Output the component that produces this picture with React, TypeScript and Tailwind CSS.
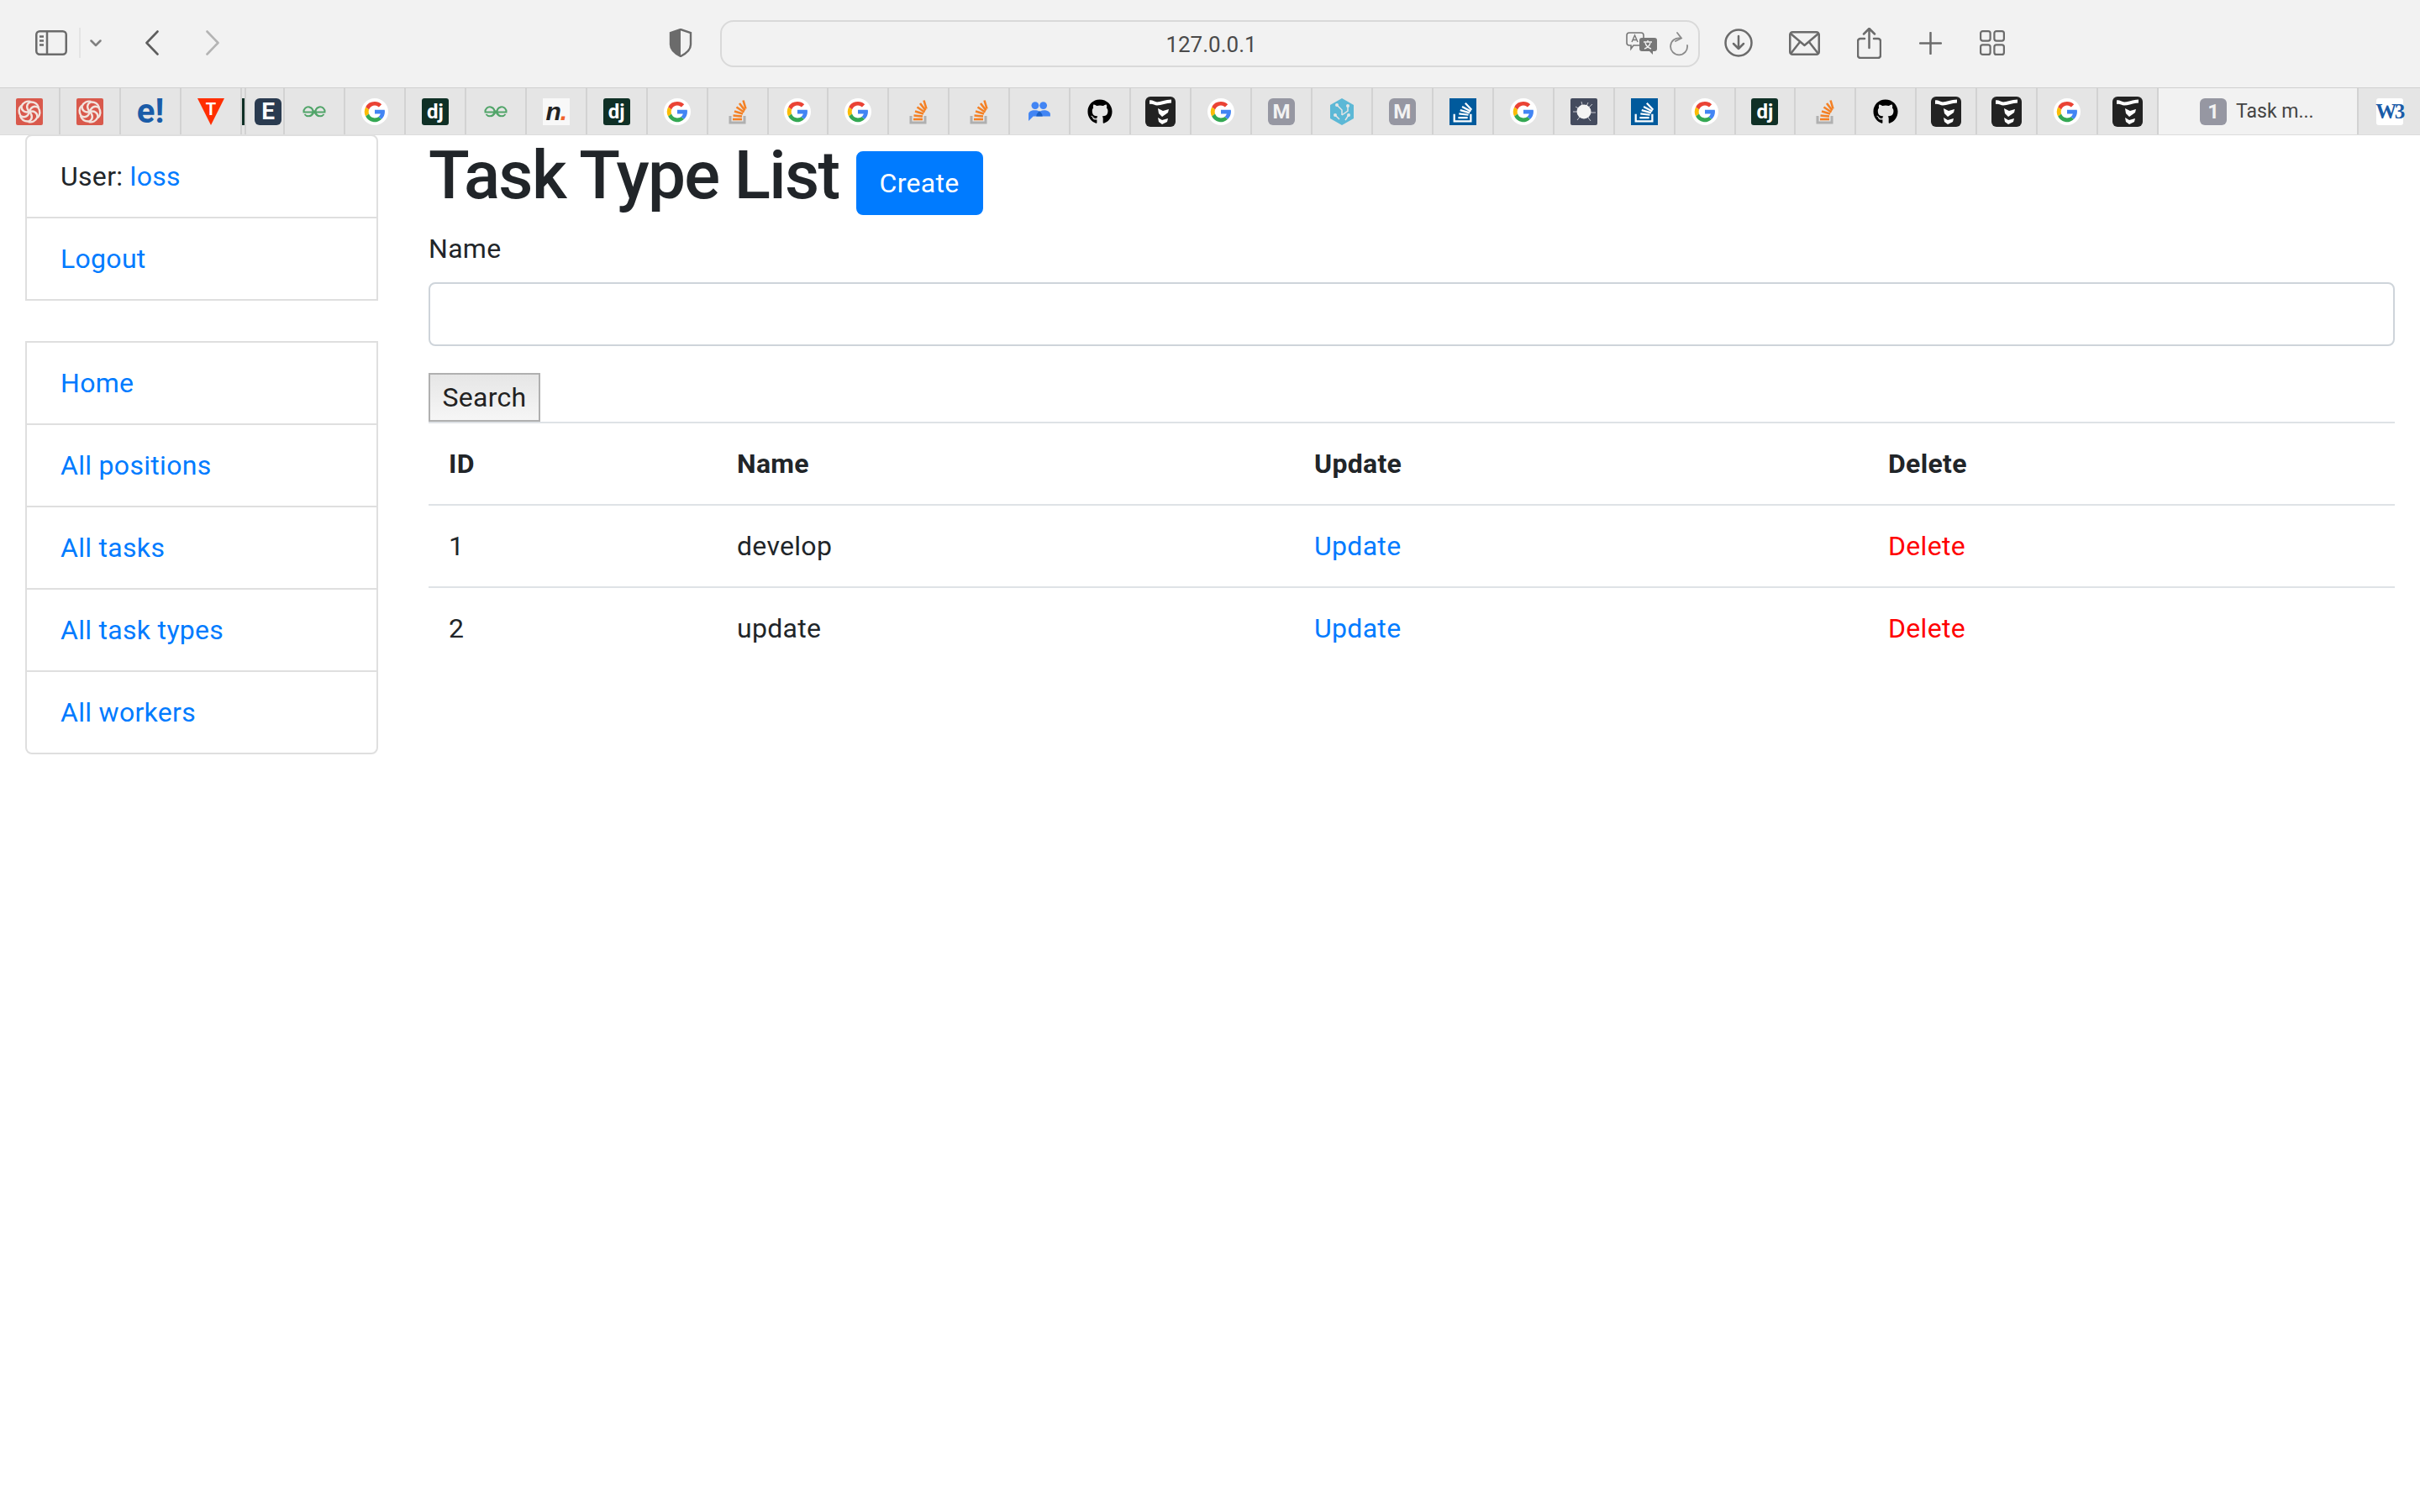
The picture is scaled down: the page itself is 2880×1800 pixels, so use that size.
import { FaGithub } from "react-icons/fa"

const iconStroke = "#6b6b6b"

function GoogleIcon() {
  return (
    <svg width="32" height="32" viewBox="0 0 32 32">
      <circle cx="16" cy="16" r="16" fill="#fff" />
      <g transform="translate(16 16) scale(1.26) translate(-16 -16)">
        <path d="M16 6.500a9.500 9.500 0 0 1 6.500 2.500l-2.600 2.600A5.800 5.800 0 0 0 10.500 14L7.400 11.600A9.500 9.500 0 0 1 16 6.500z" fill="#ea4335" />
        <path d="M7.400 11.600l3.100 2.400a5.800 5.800 0 0 0 0 4l-3.100 2.400a9.500 9.500 0 0 1 0-8.800z" fill="#fbbc05" />
        <path d="M7.400 20.400l3.100-2.400A5.800 5.800 0 0 0 19.500 20.700l3 2.300A9.500 9.500 0 0 1 7.400 20.400z" fill="#34a853" />
        <path d="M25.300 14.200H16v3.700h5.400c-.3 1.200-1 2.100-1.900 2.800l3 2.300c1.800-1.700 3-4.200 3-7 0-.6-.1-1.200-.2-1.800z" fill="#4285f4" />
      </g>
    </svg>
  )
}

function DjangoIcon() {
  return (
    <span className="flex h-8 w-8 items-center justify-center rounded-[3px] bg-[#0f3026] text-[24px] font-bold leading-none tracking-normal text-white">
      dj
    </span>
  )
}

function GfgIcon() {
  return (
    <svg width="28" height="15" viewBox="0 0 28 15" fill="none" stroke="#52a56a" strokeWidth="2">
      <path d="M14 8.500h12.500a5.500 5.500 0 1 0-1 2.500M14 8.500H1.500a5.500 5.500 0 1 1 1 2.500" />
      <path d="M8 2.500c3 0 4 3 6 6s3 5 6 5M20 2.500c-3 0-4 3-6 6s-3 5-6 5" strokeWidth="1.600" />
    </svg>
  )
}

function StackIcon() {
  return (
    <svg width="32" height="32" viewBox="0 0 32 32" fill="none">
      <path d="M7 21v8h17v-8" stroke="#b0b0b0" strokeWidth="3" />
      <path d="M10 25h11" stroke="#f48024" strokeWidth="2.600" />
      <path d="M10.500 20.500l10.500 1M12 15.500l10 3M14.500 10.500l9 6M18 6l6.500 8.500M22.500 2.500l3 10" stroke="#f48024" strokeWidth="2.600" />
    </svg>
  )
}

function StackBlueIcon() {
  return (
    <span className="flex h-8 w-8 items-center justify-center bg-[#005a9c]">
      <svg width="30" height="30" viewBox="0 0 32 32" fill="none" stroke="#fff" strokeWidth="2.400">
        <path d="M5 19v9h21v-9" />
        <path d="M10 23.500h12M11 18.500l12 1.500M12.500 14l12 3.500M15 9.500l11 6M19 5l8 8.500" />
      </svg>
    </span>
  )
}

function WaveIcon() {
  return (
    <svg width="36" height="36" viewBox="0 0 36 36">
      <rect width="36" height="36" rx="6" fill="#222" />
      <path d="M5 4.500C8 3.500 11 6.500 14 6.500 18 6.500 24 3.500 31 3.500L31 7.500C25 7.500 19 10.500 14 10.500 11 10.500 8 8 5 9z" fill="#fff" />
      <path d="M15 14l6 3 7-2-1 4-7 5-4-4z" fill="#fff" />
      <path d="M15 25l5 3 7-2-1 4-6 3-4-3z" fill="#fff" />
    </svg>
  )
}

function SwirlIcon() {
  return (
    <span className="flex h-8 w-8 items-center justify-center rounded-[2px] bg-[#d9594c]">
      <svg width="30" height="30" viewBox="0 0 30 30" fill="none" stroke="#f2e4de" strokeWidth="2.400">
        {[0, 60, 120, 180, 240, 300].map((a) => (
          <path key={a} d="M15 15C11 11 11 6 16 3.500C21 3 25 6 26 10" transform={`rotate(${a} 15 15)`} />
        ))}
      </svg>
    </span>
  )
}

function PeopleIcon() {
  return (
    <svg width="26" height="24" viewBox="0 0 28 26">
      <circle cx="8.500" cy="5" r="4.800" fill="#4285f4" />
      <circle cx="19" cy="5" r="4.800" fill="#4285f4" />
      <path d="M0 25v-9c0-3 3-5 8-5s6 2 6 2 2-2 6-2 8 2 8 5v3H6z" fill="#4285f4" />
      <path d="M10 19c0-3 2-5 4-7 2 2 4 4 4 7z" fill="#1a5fc4" />
    </svg>
  )
}

function HexIcon() {
  return (
    <svg width="28" height="32" viewBox="0 0 28 32" fill="none">
      <path d="M14 0l14 8v16l-14 8-14-8V8z" fill="#5cb8d6" />
      <path d="M8 8l6 6v6M21 10v5l-7 5M6 20l5 5M18 26l4-6" stroke="#e5e5e5" strokeWidth="1.500" />
      <circle cx="8" cy="8" r="2" fill="#e5e5e5" />
      <circle cx="21" cy="9" r="2" fill="#e5e5e5" />
      <circle cx="6" cy="20" r="2" fill="#e5e5e5" />
      <circle cx="22" cy="20" r="2" fill="#e5e5e5" />
    </svg>
  )
}

function LetterBadge({ letter }: { letter: string }) {
  return (
    <span className="flex h-8 w-8 items-center justify-center rounded-md bg-[#9697a2] text-[24px] font-bold leading-none tracking-normal text-[#f2f2f2]">
      {letter}
    </span>
  )
}

function NebulaIcon() {
  return (
    <span className="flex h-8 w-8 items-center justify-center rounded-[2px] bg-[#444b5e]">
      <svg width="30" height="30" viewBox="0 0 30 30" fill="none">
        <path d="M5 9l10 6M25 6L15 15M29 16H15M23 26l-8-11M7 25l8-10M2 15h12M12 3l3 12M20 4l-5 11" stroke="#c8cad2" strokeWidth="1" />
        <circle cx="15" cy="15" r="8.500" fill="#f4f4f4" />
      </svg>
    </span>
  )
}

function TriangleIcon() {
  return (
    <span className="relative flex h-8 w-8 items-start justify-center">
      <svg width="32" height="32" viewBox="0 0 32 32" className="absolute inset-0">
        <path d="M0 0h32L16 32z" fill="#ff2e00" />
      </svg>
      <span className="relative mt-[3px] text-[20px] font-bold leading-[20px] tracking-normal text-white">T</span>
    </span>
  )
}

function NIcon() {
  return (
    <span className="flex h-8 w-8 items-center justify-center bg-[#f8f8f8] font-['Liberation_Sans',sans-serif] text-[30px] font-bold italic leading-none tracking-[-1px] text-[#222]">
      n<span className="text-[#f0622a]">.</span>
    </span>
  )
}

const FAVICONS: Record<string, React.ReactNode> = {
  gfg: <GfgIcon />,
  g: <GoogleIcon />,
  dj: <DjangoIcon />,
  n: <NIcon />,
  so: <StackIcon />,
  people: <PeopleIcon />,
  gh: <FaGithub className="h-[30px] w-[30px] text-black" />,
  w: <WaveIcon />,
  m: <LetterBadge letter="M" />,
  hex: <HexIcon />,
  soblue: <StackBlueIcon />,
  dark: <NebulaIcon />,
}

const tabs = [
  "gfg", "g", "dj", "gfg", "n", "dj", "g", "so", "g", "g", "so", "so", "people", "gh", "w", "g",
  "m", "hex", "m", "soblue", "g", "dark", "soblue", "g", "dj", "so", "gh", "w", "w", "g", "w",
]

function Toolbar() {
  return (
    <div className="flex h-[104px] items-center bg-[#f2f2f2] pb-[2px]">
      <svg className="ml-[42px]" width="38" height="30" viewBox="0 0 38 30" fill="none" stroke={iconStroke} strokeWidth="2.500">
        <rect x="1.250" y="1.250" width="35.500" height="27.500" rx="4" />
        <path d="M14 1v28M5 7.500h5M5 12.500h5M5 17.500h5" />
      </svg>
      <div className="ml-[14px] h-[36px] w-[2px] bg-[#e4e4e4]" />
      <svg className="ml-[11px]" width="14" height="9" viewBox="0 0 14 9" fill="none" stroke="#808080" strokeWidth="2.500" strokeLinecap="round" strokeLinejoin="round">
        <path d="M1.500 1.500L7 7l5.500-5.500" />
      </svg>
      <svg className="ml-[52px]" width="16" height="30" viewBox="0 0 16 30" fill="none" stroke="#5e5e5e" strokeWidth="2.600" strokeLinecap="round" strokeLinejoin="round">
        <path d="M14.500 1.500L1.500 15l13 13.500" />
      </svg>
      <svg className="ml-[56px]" width="16" height="30" viewBox="0 0 16 30" fill="none" stroke="#b4b4b4" strokeWidth="2.600" strokeLinecap="round" strokeLinejoin="round">
        <path d="M1.500 1.500L14.500 15l-13 13.500" />
      </svg>
      <svg className="ml-[535px]" width="28" height="34" viewBox="0 0 28 34" fill="none">
        <path d="M14 1l12 4v14c0 6-6 11-12 14C8 30 2 25 2 19V5z" stroke={iconStroke} strokeWidth="2.400" />
        <path d="M14 1L2 5v14c0 6 6 11 12 14z" fill={iconStroke} />
      </svg>
      <div className="ml-[33px] mt-[2px] grid h-[56px] w-[1166px] grid-cols-[1fr_auto_1fr] items-center rounded-2xl border-2 border-[#d9d9d9]">
        <div />
        <span className="pl-[3px] pt-[2px] text-[26px] leading-none tracking-normal text-[#4a4a4a]">127.0.0.1</span>
        <div className="flex items-center justify-end pr-[12px]">
          <svg width="38" height="28" viewBox="0 0 38 28" fill="none">
            <path d="M4 1h14a3 3 0 0 1 3 3v9a3 3 0 0 1-3 3H9l-3 4v-4H4a3 3 0 0 1-3-3V4a3 3 0 0 1 3-3z" stroke="#777" strokeWidth="1.600" fill="#f2f2f2" />
            <path d="M7 12l3.500-8 3.500 8M8.200 9.500h4.600" stroke="#777" strokeWidth="1.400" />
            <path d="M19 7h15a3 3 0 0 1 3 3v10a3 3 0 0 1-3 3h-2v4l-4-4h-9a3 3 0 0 1-3-3V10a3 3 0 0 1 3-3z" fill="#777" />
            <path d="M21 12h10M26 10v2M23 13c1 4 4 6 7 7M29 13c-1 4-4 6-7 7" stroke="#f2f2f2" strokeWidth="1.400" />
          </svg>
          <svg className="ml-[14px]" width="22" height="30" viewBox="0 0 22 30" fill="none" stroke="#8a8a8a" strokeWidth="1.800" strokeLinecap="round">
            <path d="M13 8.500A10 10 0 1 0 21 17" />
            <path d="M9 2l5 6.500L7 12" />
          </svg>
        </div>
      </div>
      <svg className="ml-[29px]" width="34" height="34" viewBox="0 0 34 34" fill="none" stroke={iconStroke} strokeWidth="2.500" strokeLinecap="round" strokeLinejoin="round">
        <circle cx="17" cy="17" r="15.500" />
        <path d="M17 9v15M11 18l6 6 6-6" />
      </svg>
      <svg className="ml-[43px]" width="37" height="29" viewBox="0 0 37 29" fill="none" stroke={iconStroke} strokeWidth="2.500" strokeLinejoin="round">
        <rect x="1.250" y="1.250" width="34.500" height="26.500" rx="3" />
        <path d="M2 3l16.500 14L35 3M2 27l11-14M35 27L24 13" />
      </svg>
      <svg className="ml-[44px]" width="29" height="37" viewBox="0 0 29 37" fill="none" stroke={iconStroke} strokeWidth="2.500" strokeLinecap="round" strokeLinejoin="round">
        <path d="M9 13H4a3 3 0 0 0-3 3v17a3 3 0 0 0 3 3h21a3 3 0 0 0 3-3V16a3 3 0 0 0-3-3h-5M14.500 24V2M8 7.500L14.500 1 21 7.500" />
      </svg>
      <svg className="ml-[45px]" width="27" height="27" viewBox="0 0 27 27" fill="none" stroke={iconStroke} strokeWidth="2.500" strokeLinecap="round">
        <path d="M13.500 1v25M1 13.500h25" />
      </svg>
      <svg className="ml-[45px]" width="30" height="30" viewBox="0 0 30 30" fill="none" stroke={iconStroke} strokeWidth="2.200">
        <rect x="1.100" y="1.100" width="11.500" height="11.500" rx="2.500" />
        <rect x="17.400" y="1.100" width="11.500" height="11.500" rx="2.500" />
        <rect x="1.100" y="17.400" width="11.500" height="11.500" rx="2.500" />
        <rect x="17.400" y="17.400" width="11.500" height="11.500" rx="2.500" />
      </svg>
    </div>
  )
}

function TabBar() {
  const tabClass = "flex h-full shrink-0 items-center justify-center border-r-2 border-[#d2d2d2]"
  return (
    <div className="flex h-[57px] overflow-hidden border-b border-t border-b-[#dcdcdc] border-t-[#d0d0d0] bg-[#e5e5e5]">
      <div className={`${tabClass} w-[72px]`}><SwirlIcon /></div>
      <div className={`${tabClass} w-[72px]`}><SwirlIcon /></div>
      <div className={`${tabClass} w-[72px]`}>
        <span className="text-[40px] font-bold leading-none tracking-normal text-[#1a5ca8]">e!</span>
      </div>
      <div className={`${tabClass} w-[72px]`}><TriangleIcon /></div>
      <div className={`${tabClass} w-[5px]`}>
        <span className="h-8 w-[3px] shrink-0 bg-[#0f3026]" />
      </div>
      <div className={`${tabClass} w-[46px] justify-end pr-[2px]`}>
        <span className="flex h-8 w-8 items-center justify-center rounded-md bg-[#2a3b50] text-[28px] font-bold leading-none tracking-normal text-white">E</span>
      </div>
      {tabs.map((t, i) => (
        <div key={i} className={`${tabClass} w-[71.95px]`}>{FAVICONS[t]}</div>
      ))}
      <div className="flex h-full w-[238px] shrink-0 items-center border-r-2 border-[#d2d2d2] bg-[#f2f2f2] pl-[49px]">
        <span className="flex h-8 w-8 items-center justify-center rounded-md bg-[#9697a2] text-[24px] font-bold leading-none tracking-normal text-[#f2f2f2]">1</span>
        <span className="ml-[11px] text-[23px] leading-none tracking-normal text-[#444]">Task m...</span>
      </div>
      <div className="flex h-full flex-1 items-center justify-center">
        <span className="flex h-8 w-8 items-center justify-center rounded-[3px] bg-white font-['Liberation_Serif',serif] text-[25px] font-bold leading-none tracking-[-2.500px] text-[#1a5ca8]">
          W3
        </span>
      </div>
    </div>
  )
}

const navLinks = ["Home", "All positions", "All tasks", "All task types", "All workers"]
const taskTypes = [
  { id: 1, name: "develop" },
  { id: 2, name: "update" },
]

function Sidebar() {
  const item = "border-t-2 border-[#dfdfdf] px-10 py-6 first:border-t-0"
  return (
    <aside className="ml-[30px] w-[420px] shrink-0">
      <div className="rounded-t-lg border-2 border-[#dfdfdf]">
        <div className={item}>
          User: <a className="text-[#007bff]" href="#">loss</a>
        </div>
        <div className={item}>
          <a className="text-[#007bff]" href="#">Logout</a>
        </div>
      </div>
      <div className="mt-12 rounded-b-lg border-2 border-[#dfdfdf]">
        {navLinks.map((label) => (
          <div key={label} className={item}>
            <a className="text-[#007bff]" href="#">{label}</a>
          </div>
        ))}
      </div>
    </aside>
  )
}

export default function App() {
  const th = "border-t-2 border-[#dee2e6] px-6 py-6 text-left font-bold"
  const td = "border-t-2 border-[#dee2e6] px-6 py-6"
  return (
    <div className="min-h-screen bg-white font-['Roboto',sans-serif] text-[32px] leading-[48px] tracking-[0.3px] text-[#212529]">
      <Toolbar />
      <TabBar />
      <div className="-mt-px flex">
        <Sidebar />
        <main className="ml-[60px] w-[2340px]">
          <div className="mb-4 flex items-start">
            <h1 className="pt-[3px] text-[80px] font-medium leading-[93px] tracking-[-1.650px]">Task Type List</h1>
            <button className="ml-[20px] mt-[20px] rounded-lg border-2 border-[#007bff] bg-[#007bff] px-[26px] py-[12px] text-white">
              Create
            </button>
          </div>
          <label className="mb-4 block">Name</label>
          <input className="block h-[76px] w-full rounded-lg border-2 border-[#ced4da] bg-white" />
          <button className="mt-8 block h-[58px] w-[133px] border-2 border-[#b0b0b0] bg-gradient-to-b from-[#e6e6e6] to-[#f6f6f6] text-[#222]">
            Search
          </button>
          <table className="w-full table-fixed border-separate border-spacing-0">
            <colgroup>
              <col className="w-[343px]" />
              <col className="w-[687px]" />
              <col className="w-[683px]" />
              <col />
            </colgroup>
            <thead>
              <tr>
                <th className={th}>ID</th>
                <th className={th}>Name</th>
                <th className={th}>Update</th>
                <th className={th}>Delete</th>
              </tr>
            </thead>
            <tbody>
              {taskTypes.map((t) => (
                <tr key={t.id}>
                  <td className={td}>{t.id}</td>
                  <td className={td}>{t.name}</td>
                  <td className={td}><a className="text-[#007bff]" href="#">Update</a></td>
                  <td className={td}><a className="text-[#ff0000]" href="#">Delete</a></td>
                </tr>
              ))}
            </tbody>
          </table>
        </main>
      </div>
    </div>
  )
}
